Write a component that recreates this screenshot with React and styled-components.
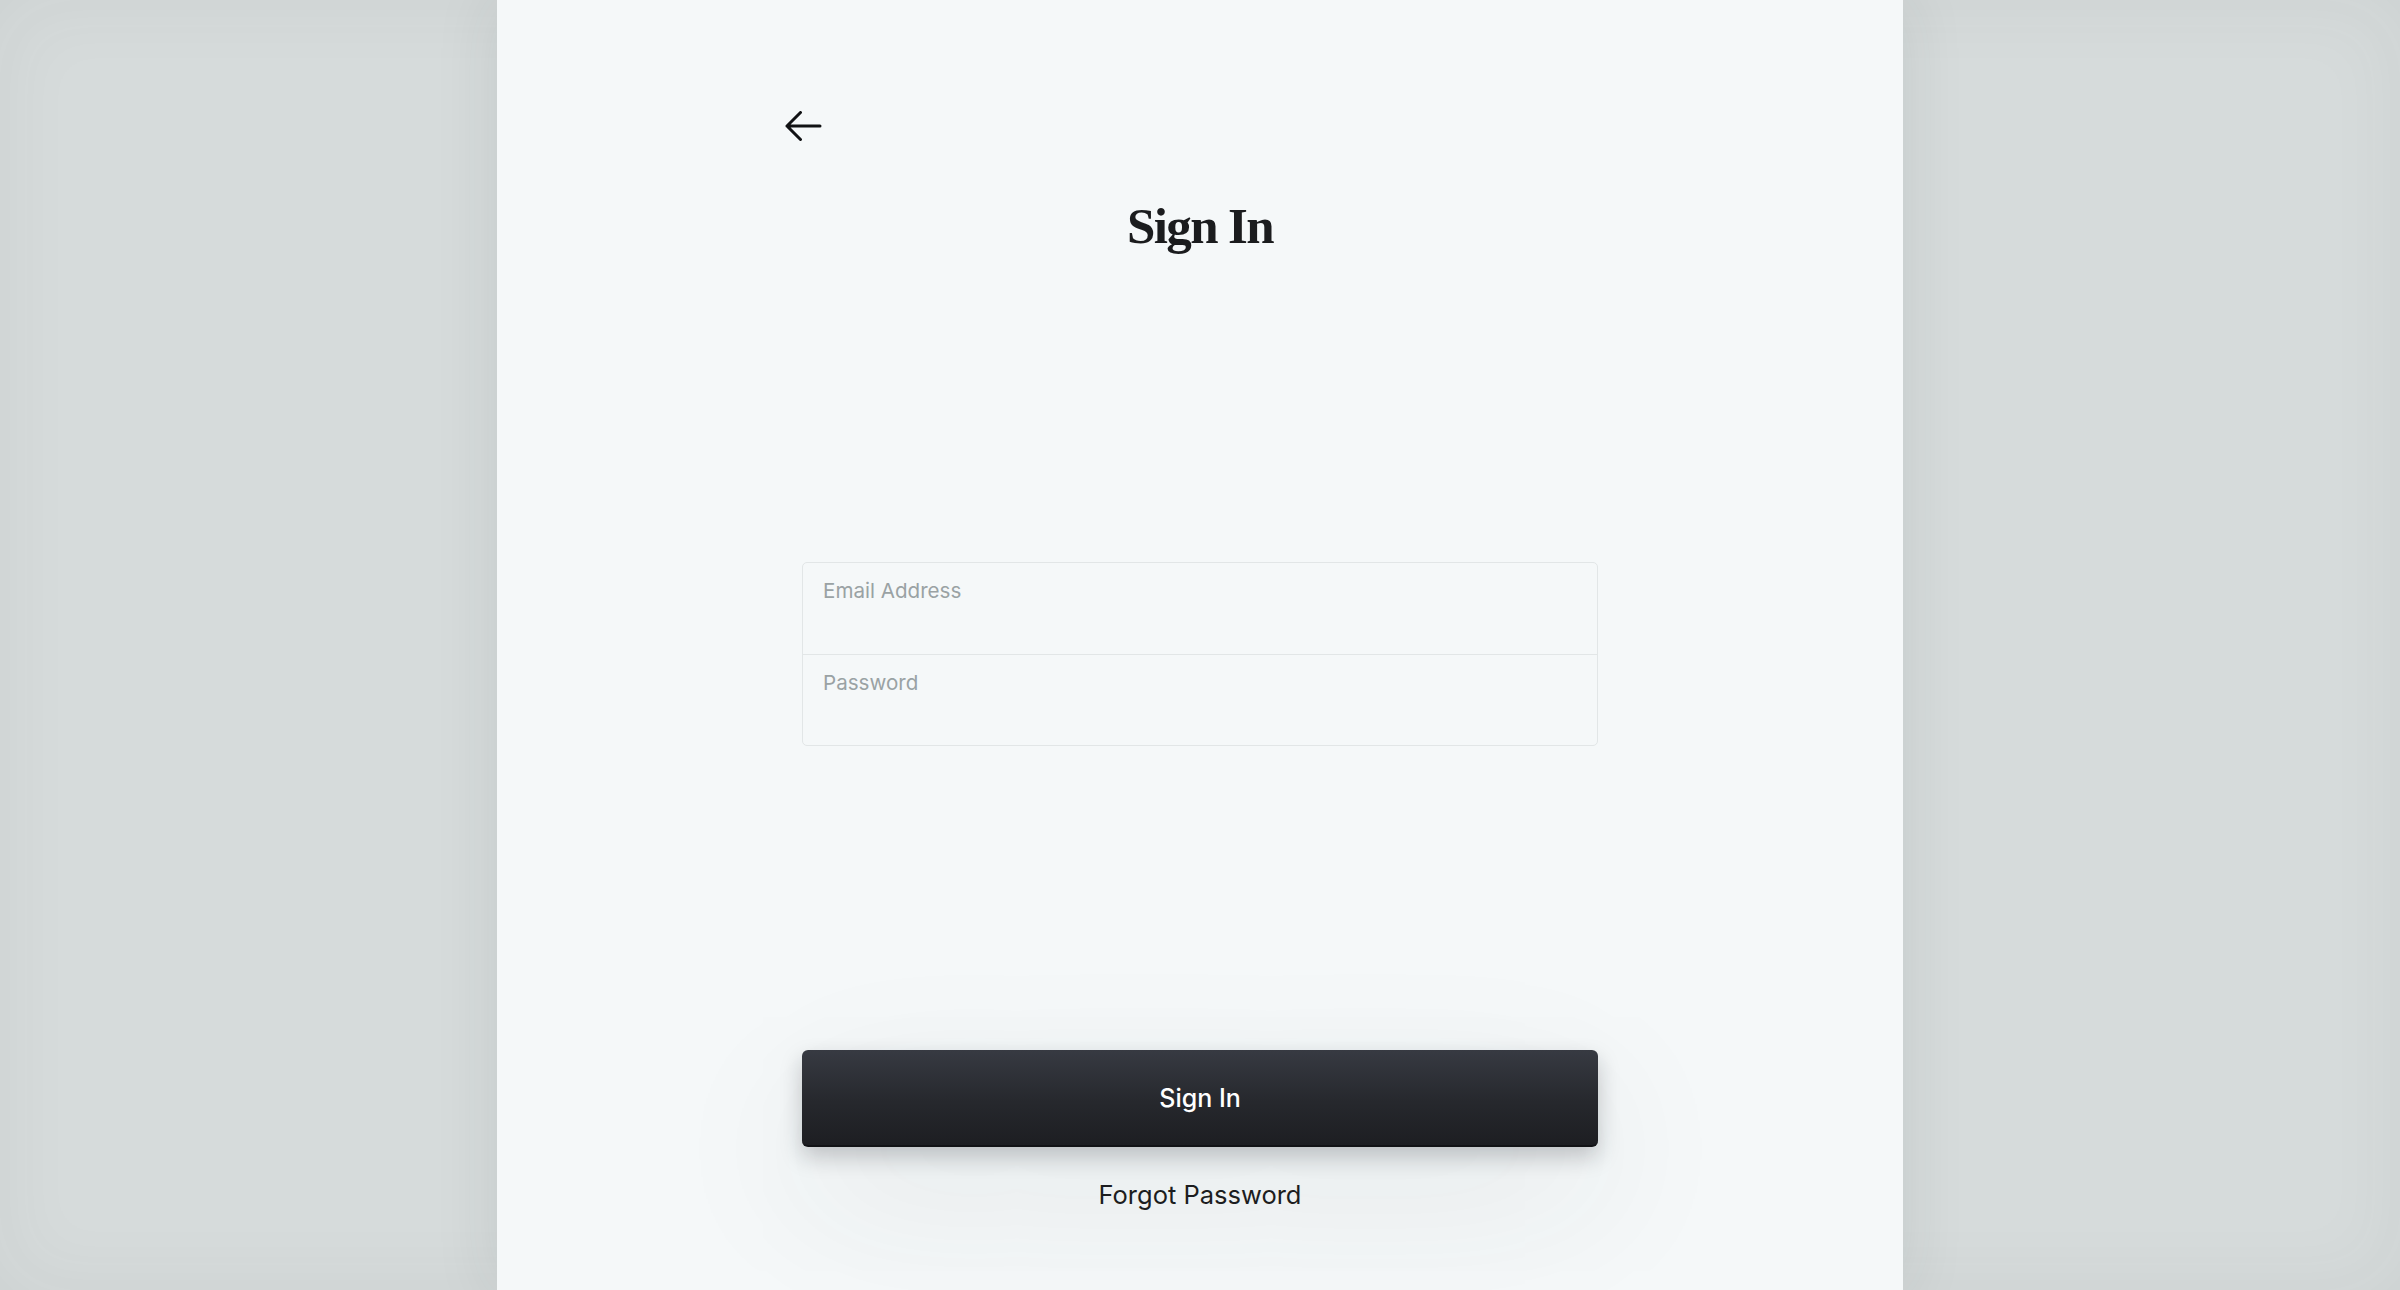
import React from "react";
import styled, { createGlobalStyle } from "styled-components";

const GlobalStyle = createGlobalStyle`
  html, body {
    margin: 0;
    padding: 0;
    height: 100%;
  }
  body {
    background: #d6dbdb;
    font-family: "Inter", "Liberation Sans", sans-serif;
    -webkit-font-smoothing: antialiased;
  }
  #root {
    min-height: 100%;
  }
`;

const Backdrop = styled.div`
  min-height: 100vh;
  display: flex;
  justify-content: center;
  box-shadow: inset 0 0 80px rgba(60, 70, 70, 0.06);
`;

const Panel = styled.main`
  width: 1406px;
  min-height: 100vh;
  background: #f5f8f9;
  box-shadow: 0 0 60px rgba(40, 50, 50, 0.1);
  display: flex;
  justify-content: center;
  padding-top: 111px;
  box-sizing: border-box;
`;

const Column = styled.div`
  width: 796px;
  display: flex;
  flex-direction: column;
`;

const BackButton = styled.button`
  align-self: flex-start;
  margin-left: -17px;
  padding: 0;
  border: 0;
  background: none;
  color: #111214;
  cursor: pointer;
  display: flex;
  height: 30px;
`;

const Title = styled.h1`
  margin: 60px 0 0;
  font-family: "Liberation Serif", "DejaVu Serif", serif;
  font-weight: 700;
  font-size: 51px;
  line-height: 1;
  letter-spacing: -1.6px;
  text-align: center;
  color: #1b1c1e;
`;

const FieldGroup = styled.div`
  margin-top: 310px;
  border: 1px solid #e2e6e7;
  border-radius: 5px;
  display: flex;
  flex-direction: column;
`;

const Field = styled.label`
  height: 91px;
  box-sizing: border-box;
  padding: 16px 20px 0;
  display: flex;
  flex-direction: column;
  gap: 6px;
  border-top: ${(p) => (p.$first ? "none" : "1px solid #e2e6e7")};
`;

const FieldLabel = styled.span`
  font-size: 20.6px;
  line-height: 24px;
  color: #9aa2a4;
`;

const FieldInput = styled.input`
  border: 0;
  outline: none;
  background: transparent;
  padding: 0;
  font-family: inherit;
  font-size: 22px;
  color: #1b1c1e;
`;

const SubmitButton = styled.button`
  margin-top: 304px;
  height: 97px;
  border: 0;
  border-radius: 6px;
  background: linear-gradient(180deg, #373a42 0%, #26282d 55%, #1d1e22 100%);
  border-bottom: 2px solid #121316;
  color: #ffffff;
  font-family: "Inter", "Liberation Sans", sans-serif;
  font-size: 25px;
  font-weight: 500;
  cursor: pointer;
  box-shadow: 0 10px 22px rgba(20, 24, 30, 0.22),
    0 50px 160px rgba(40, 55, 60, 0.09);
`;

const ForgotLink = styled.a`
  margin-top: 33px;
  align-self: center;
  font-size: 25.5px;
  line-height: 1.2;
  color: #1c1d20;
  text-decoration: none;
  cursor: pointer;
`;

const ArrowLeft = () => (
  <svg width="37" height="30" viewBox="0 0 37 30" fill="none">
    <path
      d="M15.5 1.5 L2 15 L15.5 28.5 M2 15 H35"
      stroke="currentColor"
      strokeWidth="3"
      strokeLinecap="round"
      strokeLinejoin="round"
    />
  </svg>
);

export default function App() {
  return (
    <>
      <GlobalStyle />
      <Backdrop>
        <Panel>
          <Column>
            <BackButton aria-label="Back">
              <ArrowLeft />
            </BackButton>
            <Title>Sign In</Title>
            <FieldGroup>
              <Field $first>
                <FieldLabel>Email Address</FieldLabel>
                <FieldInput type="email" />
              </Field>
              <Field>
                <FieldLabel>Password</FieldLabel>
                <FieldInput type="password" />
              </Field>
            </FieldGroup>
            <SubmitButton>Sign In</SubmitButton>
            <ForgotLink>Forgot Password</ForgotLink>
          </Column>
        </Panel>
      </Backdrop>
    </>
  );
}
